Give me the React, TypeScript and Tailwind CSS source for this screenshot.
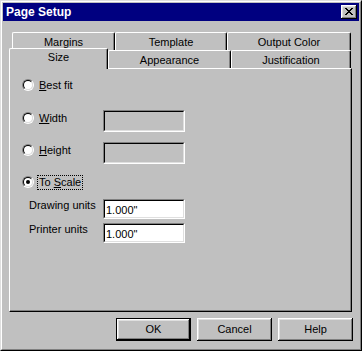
import React from "react";

const FONT = { fontFamily: '"Liberation Sans", Arial, sans-serif' };

function Radio({ checked }: { checked?: boolean }) {
  return (
    <div className="w-[12px] h-[12px] shrink-0 rounded-full border border-t-[#808080] border-l-[#808080] border-r-white border-b-white">
      <div className="w-full h-full rounded-full border border-t-black border-l-black border-r-[#dfdfdf] border-b-[#dfdfdf] bg-white flex items-center justify-center">
        {checked && <div className="w-[4px] h-[4px] rounded-full bg-black" />}
      </div>
    </div>
  );
}

function RadioLabel({ children, focused }: { children: React.ReactNode; focused?: boolean }) {
  return (
    <div
      className={
        focused
          ? "ml-[3px] px-[1px] h-[15px] flex items-center border border-dotted border-black text-black"
          : "ml-[3px] px-[1px] h-[15px] flex items-center border border-transparent text-black"
      }
    >
      {children}
    </div>
  );
}

function Field({ value, enabled, tall }: { value?: string; enabled?: boolean; tall?: boolean }) {
  return (
    <div
      className={
        tall
          ? "w-[82px] h-[22px] border border-t-[#808080] border-l-[#808080] border-r-white border-b-white"
          : "w-[82px] h-[20px] border border-t-[#808080] border-l-[#808080] border-r-white border-b-white"
      }
    >
      <div
        className={
          enabled
            ? "w-full h-full border border-t-black border-l-black border-r-[#dfdfdf] border-b-[#dfdfdf] bg-white flex items-center pl-[1px] pt-[2px] text-black"
            : "w-full h-full border border-t-black border-l-black border-r-[#dfdfdf] border-b-[#dfdfdf] bg-[#c0c0c0]"
        }
      >
        {value}
      </div>
    </div>
  );
}

function BackTab({ label, w }: { label: string; w: string }) {
  return (
    <div
      className={`${w} h-[18px] shrink-0 flex items-center justify-center border-t border-l border-r border-t-white border-l-white border-r-black rounded-tl-[2px] rounded-tr-[2px] shadow-[inset_-1px_0_0_#808080] text-black pt-[1px]`}
    >
      {label}
    </div>
  );
}

function Button({ label, isDefault }: { label: string; isDefault?: boolean }) {
  if (isDefault) {
    return (
      <div className="w-[75px] h-[23px] border border-black">
        <div className="w-full h-full flex items-center justify-center shadow-[inset_-1px_-1px_0_#000,inset_1px_1px_0_#fff,inset_-2px_-2px_0_#808080,inset_2px_2px_0_#dfdfdf] text-black">
          {label}
        </div>
      </div>
    );
  }
  return (
    <div className="w-[75px] h-[23px] flex items-center justify-center shadow-[inset_-1px_-1px_0_#000,inset_1px_1px_0_#fff,inset_-2px_-2px_0_#808080,inset_2px_2px_0_#dfdfdf] text-black">
      {label}
    </div>
  );
}

export default function App() {
  return (
    <div style={FONT} className="w-[362px] h-[351px] bg-[#c0c0c0] text-[11px] leading-none border border-t-[#dfdfdf] border-l-[#dfdfdf] border-r-black border-b-black">
      <div className="w-full h-full border border-t-white border-l-white border-r-[#808080] border-b-[#808080] p-[1px] flex flex-col">
        {/* Title bar */}
        <div className="h-[18px] shrink-0 bg-[#000080] flex items-center justify-between pl-[3px] pr-[2px]">
          <span className="text-white font-bold text-[12px]">Page Setup</span>
          <div className="w-[16px] h-[14px] flex items-center justify-center bg-[#c0c0c0] shadow-[inset_-1px_-1px_0_#000,inset_1px_1px_0_#fff,inset_-2px_-2px_0_#808080,inset_2px_2px_0_#dfdfdf]">
            <svg width="8" height="7" viewBox="0 0 8 7" shapeRendering="crispEdges" className="-mt-[1px] -ml-[1px]">
              <path
                fill="#000"
                d="M0 0h2v1H0zM6 0h2v1H6zM1 1h2v1H1zM5 1h2v1H5zM2 2h4v1H2zM3 3h2v1H3zM2 4h4v1H2zM1 5h2v1H1zM5 5h2v1H5zM0 6h2v1H0zM6 6h2v1H6z"
              />
            </svg>
          </div>
        </div>

        {/* Tabs */}
        <div className="mt-[11px] ml-[6px] flex flex-col">
          <div className="flex h-[18px] pl-[3px]">
            <BackTab label="Margins" w="w-[103px]" />
            <BackTab label="Template" w="w-[112px]" />
            <BackTab label="Output Color" w="w-[124px]" />
          </div>
          <div className="flex items-end h-[18px]">
            <div className="relative z-10 w-[99px] h-[21px] -mb-[1px] shrink-0 bg-[#c0c0c0] flex items-center justify-center border-t border-l border-r border-t-white border-l-white border-r-black rounded-tl-[2px] rounded-tr-[2px] shadow-[inset_-1px_0_0_#808080] text-black pb-[3px]">
              Size
            </div>
            <div className="w-[123px] h-[18px] shrink-0 flex items-center justify-center border-t border-l border-r border-t-white border-l-white border-r-black rounded-tl-[2px] rounded-tr-[2px] shadow-[inset_-1px_0_0_#808080] text-black pt-[1px]">
              Appearance
            </div>
            <div className="w-[120px] h-[18px] shrink-0 flex items-center justify-center border-t border-l border-r border-t-white border-l-white border-r-black rounded-tl-[2px] rounded-tr-[2px] shadow-[inset_-1px_0_0_#808080] text-black pt-[1px]">
              Justification
            </div>
          </div>

          {/* Panel */}
          <div className="w-[343px] h-[244px] border border-t-white border-l-white border-r-black border-b-black shadow-[inset_-1px_-1px_0_#808080] flex flex-col">
            <div className="mt-[8px] h-[16px] flex items-center pl-[12px]">
              <Radio />
              <RadioLabel>
                <span>
                  <u>B</u>est fit
                </span>
              </RadioLabel>
            </div>

            <div className="mt-[17px] h-[22px] flex items-start">
              <div className="w-[93px] h-[16px] flex items-center pl-[12px]">
                <Radio />
                <RadioLabel>
                  <span>
                    <u>W</u>idth
                  </span>
                </RadioLabel>
              </div>
              <Field tall />
            </div>

            <div className="mt-[10px] h-[22px] flex items-start">
              <div className="w-[93px] h-[16px] flex items-center pl-[12px]">
                <Radio />
                <RadioLabel>
                  <span>
                    <u>H</u>eight
                  </span>
                </RadioLabel>
              </div>
              <Field tall />
            </div>

            <div className="mt-[10px] h-[16px] flex items-center pl-[12px]">
              <Radio checked />
              <RadioLabel focused>
                <span>
                  To <u>S</u>cale
                </span>
              </RadioLabel>
            </div>

            <div className="mt-[9px] h-[20px] flex items-start">
              <div className="w-[93px] pl-[19px] leading-[13px] text-black">Drawing units</div>
              <Field enabled value={'1.000"'} />
            </div>

            <div className="mt-[4px] h-[20px] flex items-start">
              <div className="w-[93px] pl-[19px] leading-[13px] text-black">Printer units</div>
              <Field enabled value={'1.000"'} />
            </div>
          </div>
        </div>

        {/* Buttons */}
        <div className="mt-[6px] flex justify-end gap-[6px] pr-[6px]">
          <Button label="OK" isDefault />
          <Button label="Cancel" />
          <Button label="Help" />
        </div>
      </div>
    </div>
  );
}
